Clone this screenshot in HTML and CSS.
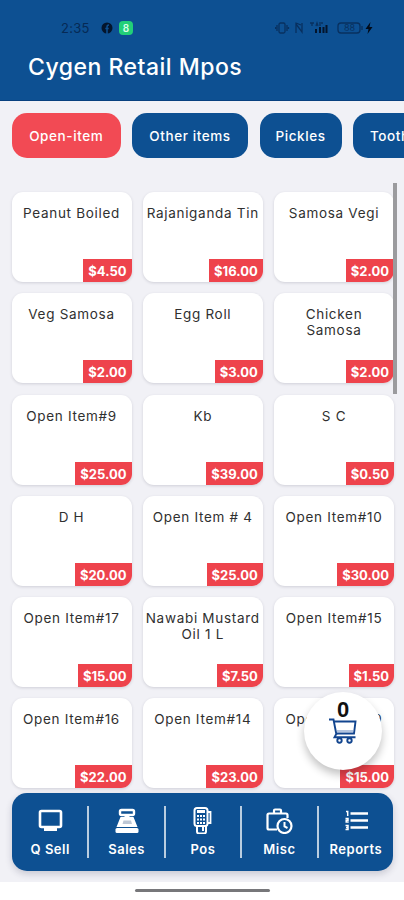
FILE: index.html
```html
<!DOCTYPE html>
<html lang="en">
<head>
    <meta charset="UTF-8">
    <meta name="viewport" content="width=device-width, initial-scale=1.0">
    <title>Cygen Retail Mpos</title>
    <link rel="stylesheet" href="styles.css">
</head>
<body>
<div class="screen">
    <header class="topbar">
        <div class="status">
            <span class="clock">2:35</span>
            <svg class="fb" width="12" height="12" viewBox="0 0 12 12"><circle cx="6" cy="6" r="5.5" fill="#04152c"/><path d="M6 12V5q0-2 2-2M4.300 6.500h3.400" fill="none" stroke="#0d5092" stroke-width="1.500"/></svg>
            <span class="app-badge">8</span>
            <div class="status-right">
                <svg width="101" height="16" viewBox="0 0 101 16" fill="none" stroke="#08305f" stroke-width="1.300">
                    <rect x="4" y="3" width="6" height="10" rx="1.500"/><path d="M2 5v6M12 5v6M.5 7v2M13.500 7v2"/>
                    <path d="M21 13V4l6 8V3M21 3l5 2"/>
                    <path d="M35 3h4M37 3v3M41 6l1-3 1 3M45 2v4M48 3h-2"/>
                    <path d="M41 13V9M45 13V7M48.500 13V7M51.500 13V5" stroke="#04152c" stroke-width="2"/>
                    <rect x="63" y="3" width="22" height="10" rx="3"/><path d="M87 6v4"/>
                    <text x="69" y="11.200" class="battery-text">88</text>
                    <path d="M95.500 2l-5 7h3l-1 5 5-7h-3z" fill="#020b18" stroke="none"/>
                </svg>
            </div>
        </div>
        <h1>Cygen Retail Mpos</h1>
    </header>

    <!-- Categories -->
    <div class="chips">
        <a class="chip active">Open-item</a>
        <a class="chip other">Other items</a>
        <a class="chip pickles">Pickles</a>
        <a class="chip tooth">Toothpaste</a>
    </div>

    <!-- Products -->
    <main class="products">
        <div class="card"><p>Peanut Boiled</p><span class="price">$4.50</span></div>
        <div class="card"><p>Rajaniganda Tin</p><span class="price">$16.00</span></div>
        <div class="card"><p>Samosa Vegi</p><span class="price">$2.00</span></div>
        <div class="card"><p>Veg Samosa</p><span class="price">$2.00</span></div>
        <div class="card"><p>Egg Roll</p><span class="price">$3.00</span></div>
        <div class="card"><p>Chicken<br>Samosa</p><span class="price">$2.00</span></div>
        <div class="card"><p>Open Item#9</p><span class="price">$25.00</span></div>
        <div class="card"><p>Kb</p><span class="price">$39.00</span></div>
        <div class="card"><p>S C</p><span class="price">$0.50</span></div>
        <div class="card"><p>D H</p><span class="price">$20.00</span></div>
        <div class="card"><p>Open Item # 4</p><span class="price">$25.00</span></div>
        <div class="card"><p>Open Item#10</p><span class="price">$30.00</span></div>
        <div class="card"><p>Open Item#17</p><span class="price">$15.00</span></div>
        <div class="card"><p>Nawabi Mustard<br>Oil 1 L</p><span class="price">$7.50</span></div>
        <div class="card"><p>Open Item#15</p><span class="price">$1.50</span></div>
        <div class="card"><p>Open Item#16</p><span class="price">$22.00</span></div>
        <div class="card"><p>Open Item#14</p><span class="price">$23.00</span></div>
        <div class="card"><p>Open Item#19</p><span class="price">$15.00</span></div>
    </main>
    <div class="scrollbar"></div>

    <!-- Floating cart -->
    <div class="cart">
        <span class="count">0</span>
        <svg width="28" height="26" viewBox="0 0 28 26" fill="none" stroke="#12458f" stroke-width="1.900">
            <path d="M0 1.500h4.500L7.500 17M5 3.500h21.500L25 15.500H7.500M7.500 15.500l-2 3.700h21"/>
            <path d="M8 13h16" stroke="#7f9cc8" stroke-width="1.200"/>
            <circle cx="10.500" cy="22.500" r="2.200"/><circle cx="20.500" cy="22.500" r="2.200"/>
        </svg>
    </div>

    <!-- Bottom navigation -->
    <nav class="bottomnav">
        <a class="tab">
            <svg width="28" height="28" viewBox="0 0 28 28"><rect x="4" y="5" width="21" height="16" rx="1.500" fill="none" stroke="#fff" stroke-width="2.600"/><path d="M8 21h13v4H8z" fill="#fff"/></svg>
            <span>Q Sell</span>
        </a>
        <a class="tab">
            <svg width="28" height="28" viewBox="0 0 28 28"><rect x="7" y="4" width="14" height="5" rx="1.500" fill="none" stroke="#fff" stroke-width="2.400"/><path d="M11.500 9h5v3h-5zM7.500 11h13l4 10h-21z" fill="#fff"/><path d="M10.500 14.500h7.500l1 3.500h-9.500z" fill="#bdc7d5"/><rect x="2.500" y="22" width="23" height="5" rx="1.500" fill="#fff"/></svg>
            <span>Sales</span>
        </a>
        <a class="tab">
            <svg width="28" height="28" viewBox="0 0 28 28" fill="none" stroke="#fff"><rect x="5.500" y="2" width="13" height="18" rx="2.500" stroke-width="2"/><path d="M8 5.500h8" stroke-width="3"/><path d="M8 10h2M11 10h2M14 10h2M8 13.500h2M11 13.500h2M14 13.500h2M8 17h2M11 17h2M14 17h2" stroke-width="2"/><path d="M19 6h2.500v11H19" stroke-width="1.800"/><path d="M8 20v5.500q0 2 2 2h5q2 0 2-2V20M14 20v5" stroke-width="2"/></svg>
            <span>Pos</span>
        </a>
        <a class="tab">
            <svg width="28" height="28" viewBox="0 0 28 28" fill="none" stroke="#fff" stroke-width="2.200"><path d="M12 23.500H4q-1.500 0-1.500-1.500V9q0-1.500 1.500-1.500h17q1.500 0 1.500 1.500v3M9 7V4.500q0-1 1-1h5q1 0 1 1V7"/><circle cx="19.500" cy="20" r="7"/><path d="M19.500 16v4.500l3 1.500" stroke-width="2"/></svg>
            <span>Misc</span>
        </a>
        <a class="tab">
            <svg width="28" height="28" viewBox="0 0 28 28" fill="none" stroke="#fff"><path d="M8.500 7.500H26M8.500 14.500H26M8.500 21.500H26" stroke-width="2.500"/><path d="M4 5.500h1.700V10M3.500 12.500H6v1.700H4.200v1.700h2.500M3.500 19.500H6v4H3.500M4 21.500h2" stroke-width="1.500"/></svg>
            <span>Reports</span>
        </a>
    </nav>
    <div class="gesture"><div class="handle"></div></div>
</div>
</body>
</html>
```
FILE: styles.css
```css
* {
    box-sizing: border-box;
}
body {
    margin: 0;
    font-family: Inter, "Open Sans", sans-serif;
}
.screen {
    position: relative;
    display: flex;
    flex-direction: column;
    width: 404px;
    height: 900px;
    overflow: hidden;
    background: #f1f1f6;
}

/* Blue header with the status icons */
.topbar {
    height: 101px;
    flex: none;
    background: #0d5092;
    border-bottom: 1px solid #08407f;
    padding-top: 20px;
}
.status {
    display: flex;
    align-items: center;
    height: 16px;
    padding-left: 61px;
    padding-right: 28px;
}
.clock {
    width: 40px;
    font-size: 13px;
    letter-spacing: 0.3px;
    color: #062a55;
}
.app-badge {
    width: 14px;
    height: 14px;
    margin-left: 6px;
    border-radius: 4px;
    background: #22cf78;
    color: #d8ffe9;
    font-size: 10px;
    font-weight: 600;
    line-height: 14px;
    text-align: center;
}
.status-right {
    display: flex;
    margin-left: auto;
}
.battery-text {
    font-size: 9px;
    fill: #08305f;
    stroke: none;
}
h1 {
    margin: 16px 0 0 28px;
    font-size: 23px;
    font-weight: 500;
    line-height: 30px;
    letter-spacing: 0.5px;
    color: #fff;
}

/* Category chips */
.chips {
    display: flex;
    flex: none;
    gap: 11.500px;
    height: 91px;
    padding: 12px 0 0 12px;
    overflow: hidden;
}
.chip {
    flex: none;
    width: 108.500px;
    height: 45px;
    border-radius: 15px;
    background: #0d5092;
    color: #fff;
    font-size: 13.500px;
    font-weight: 500;
    line-height: 46px;
    letter-spacing: 0.6px;
    text-align: center;
    white-space: nowrap;
}
.chip.active {
    background: #f24a54;
}
.chip.other {
    width: 116px;
}
.chip.pickles {
    width: 82px;
}
.chip.tooth {
    width: 120px;
    padding-left: 17px;
    text-align: left;
}

/* Product grid */
.products {
    display: grid;
    flex: none;
    grid-template-columns: repeat(3, 120px);
    grid-auto-rows: 90px;
    gap: 11.250px;
    height: 601px;
    padding-left: 11.500px;
}
.card {
    display: flex;
    flex-direction: column;
    justify-content: space-between;
    overflow: hidden;
    border-radius: 11px;
    background: #fff;
    box-shadow: 0 1px 3px rgba(40, 40, 60, 0.16);
}
.card p {
    margin: 13px 0 0;
    font-size: 13.500px;
    line-height: 16px;
    letter-spacing: 0.7px;
    text-align: center;
    white-space: nowrap;
    color: #303030;
}
.price {
    align-self: flex-end;
    height: 23px;
    padding: 0 5px;
    background: #ee434c;
    color: #fff;
    font-size: 13px;
    font-weight: 700;
    line-height: 24px;
}
.scrollbar {
    position: absolute;
    top: 183px;
    left: 393px;
    width: 4px;
    height: 211px;
    background: #9b9b9e;
}

/* Cart button over the grid */
.cart {
    position: absolute;
    top: 692px;
    left: 304px;
    display: flex;
    flex-direction: column;
    align-items: center;
    width: 78px;
    height: 78px;
    padding-top: 7px;
    border-radius: 50%;
    background: #fff;
    box-shadow: 0 5px 9px rgba(0, 0, 0, 0.24);
}
.count {
    height: 19px;
    font-family: "Liberation Sans", Arial, sans-serif;
    font-size: 22px;
    font-weight: 700;
    line-height: 22px;
    color: #111;
}

/* Bottom bar */
.bottomnav {
    display: flex;
    flex: none;
    width: 381px;
    height: 78px;
    margin: 0 0 11px 12px;
    padding-left: 1px;
    border-radius: 15px;
    background: #0d5092;
    box-shadow: 0 3px 7px rgba(40, 40, 70, 0.2);
}
.tab {
    display: flex;
    flex: 1;
    flex-direction: column;
    align-items: center;
    height: 52px;
    margin-top: 13px;
    border-right: 2px solid #b9cde0;
    color: #fff;
}
.tab:last-child {
    border-right: none;
}
.tab span {
    margin-top: 7px;
    font-size: 13px;
    font-weight: 600;
    line-height: 16px;
    letter-spacing: 0.5px;
}
.gesture {
    display: flex;
    flex: 1;
    justify-content: center;
    padding-top: 7px;
    background: #fff;
}
.handle {
    width: 135px;
    height: 3px;
    border-radius: 2px;
    background: #77777a;
}
```
